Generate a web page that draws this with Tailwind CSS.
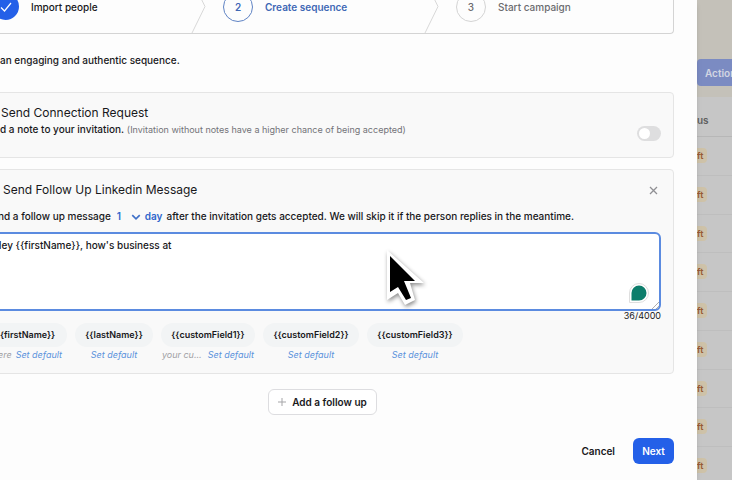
<!DOCTYPE html>
<html lang="en">
<head>
    <meta charset="UTF-8">
    <meta name="viewport" content="width=device-width, initial-scale=1.0">
    <title>Create sequence</title>
    <script src="https://cdn.jsdelivr.net/npm/@tailwindcss/browser@4"></script>
</head>
<body class="h-screen overflow-hidden flex bg-[#c6c6c6] font-['Inter',sans-serif] text-[10px] leading-4 text-[#18181b]">
    <main class="relative flex-1 min-w-0 -ml-6 pr-[23px] bg-[#fdfdfd] shadow-md">
        <!-- Steps -->
        <ol class="flex items-end h-[34px] overflow-hidden border-b border-r border-[#d4d4d4] rounded-br font-medium">
            <li class="relative shrink-0 w-[223px] h-[53px] flex items-center gap-3 pl-4">
                <span class="size-[27px] rounded-full bg-[#2460e8] flex items-center justify-center">
                    <svg class="size-4" viewBox="0 0 16 16" fill="none" stroke="#fff" stroke-width="1.2"><path d="M3 8.5l3.5 3.5L13 4"/></svg>
                </span>
                Import people
                <svg class="absolute right-[-8px] top-0 h-full w-4" viewBox="0 0 16 53" fill="none" stroke="#d8d8d8"><path d="M1 0l13 26.500L1 53"/></svg>
            </li>
            <li class="relative shrink-0 w-[233px] h-[53px] flex items-center gap-3 pl-6 font-semibold text-[#3f68b5]">
                <span class="size-[30px] rounded-full border border-[#5f83c4] flex items-center justify-center">2</span>
                Create sequence
                <svg class="absolute right-[-8px] top-0 h-full w-4" viewBox="0 0 16 53" fill="none" stroke="#d8d8d8"><path d="M1 0l13 26.500L1 53"/></svg>
            </li>
            <li class="h-[53px] flex items-center gap-3 pl-6 text-[#6b6b6f]">
                <span class="size-[30px] rounded-full border border-[#d4d4d4] flex items-center justify-center">3</span>
                Start campaign
            </li>
        </ol>

        <p class="mt-[18px] pl-6 font-medium">an engaging and authentic sequence.</p>

        <!-- Connection request -->
        <section class="mt-6 h-[66px] flex items-center justify-between border border-[#e5e5e5] rounded bg-[#f9f9f9] pl-6 pr-3">
            <div class="-mt-2">
                <h2 class="text-xs leading-4">Send Connection Request</h2>
                <p><span class="-ml-px font-medium">d a note to your invitation.</span> <span class="text-[9px] text-[#737378]">(Invitation without notes have a higher chance of being accepted)</span></p>
            </div>
            <label class="relative mt-4 w-6 h-[15px]">
                <input type="checkbox" role="switch" aria-label="Add a note" class="peer appearance-none block w-6 h-[15px] rounded-full bg-[#dededf]">
                <span class="absolute left-0.5 top-0.5 size-[11px] rounded-full bg-white"></span>
            </label>
        </section>

        <!-- Follow up message -->
        <section class="mt-[11px] border border-[#e5e5e5] rounded bg-[#f9f9f9] pr-3 pb-2.5">
            <div class="pt-3 flex items-center justify-between pl-[26px]">
                <h2 class="text-xs leading-4">Send Follow Up Linkedin Message</h2>
                <button type="button" aria-label="Remove follow up" class="size-4 flex items-center justify-center">
                    <svg class="size-[9px]" viewBox="0 0 9 9" fill="none" stroke="#909094" stroke-width="1.3"><path d="M1 1l7 7M8 1l-7 7"/></svg>
                </button>
            </div>
            <div class="mt-2.5 flex items-center whitespace-nowrap pl-[21px] font-medium">
                <span>nd a follow up message</span>
                <span class="relative ml-1.5 w-7 text-[#2f66cc] font-semibold">
                    <select aria-label="Delay" class="appearance-none w-full h-4 bg-transparent"><option>1</option></select>
                    <svg class="absolute right-1 top-1 size-2.5" viewBox="0 0 8 8" fill="none" stroke="#3f70c8" stroke-width="1.3"><path d="M1 2.500l3 3 3-3"/></svg>
                </span>
                <span class="mr-1 text-[#2f66cc] font-semibold">day</span>
                <span>after the invitation gets accepted. We will skip it if the person replies in the meantime.</span>
            </div>
            <div class="relative mt-2">
                <textarea aria-label="Message" class="block w-full h-[79px] px-[15px] py-[3px] font-medium leading-4 bg-white border-2 border-[#5b8be0] rounded-md outline-none resize-none">Hey {{firstName}}, how's business at</textarea>
                <svg class="absolute right-3 bottom-2 size-5" viewBox="0 0 20 20"><path d="M10 0.500a9.500 9.500 0 0 1 0 19H0.500V10A9.500 9.500 0 0 1 10 0.500z" fill="#fff" stroke="#dedede"/><path d="M10 2.500a7.500 7.500 0 0 1 0 15H2.500V10A7.500 7.500 0 0 1 10 2.500z" fill="#0d7d6b"/></svg>
                <svg class="absolute right-0.5 bottom-0.5 size-[7px]" viewBox="0 0 7 7" stroke="#999" stroke-width="0.8"><path d="M0 7L7 0M4 7l3-3"/></svg>
                <!-- Mouse pointer -->
                <svg class="absolute left-[407px] top-[15px] h-16 w-12 drop-shadow-[1px_2px_2px_rgba(0,0,0,0.45)]" viewBox="0 0 48 64">
                    <path d="M3 3L40 36H26L31 53 21 58 14 46 3 53z" fill="#fff"/>
                    <path d="M6 9L31 34H20L27 51 22 53 14 40 6 45z" fill="#000"/>
                </svg>
            </div>
            <p class="text-right text-[9px] leading-[10px]">36/4000</p>
            <div class="mt-0.5 ml-[7px] flex gap-2 text-[9px]">
                <div class="w-[83px]">
                    <button type="button" class="w-full h-6 rounded-full bg-[#f2f4f5] font-semibold">{{firstName}}</button>
                    <div class="h-4 flex items-center justify-end gap-1 pr-[5px] italic text-[#a0a0a4]"><span>ere</span><a href="#" class="text-[#5b93dc]">Set default</a></div>
                </div>
                <div class="w-[78px] text-center">
                    <button type="button" class="w-full h-6 rounded-full bg-[#f2f4f5] font-semibold">{{lastName}}</button>
                    <a href="#" class="block italic text-[#5b93dc]">Set default</a>
                </div>
                <div class="w-[94px]">
                    <button type="button" class="w-full h-6 rounded-full bg-[#f2f4f5] font-semibold">{{customField1}}</button>
                    <div class="flex justify-center gap-1.5 whitespace-nowrap italic text-[#a0a0a4]"><span>your cu...</span><a href="#" class="text-[#5b93dc]">Set default</a></div>
                </div>
                <div class="w-[96px] text-center">
                    <button type="button" class="w-full h-6 rounded-full bg-[#f2f4f5] font-semibold">{{customField2}}</button>
                    <a href="#" class="block italic text-[#5b93dc]">Set default</a>
                </div>
                <div class="w-[96px] text-center">
                    <button type="button" class="w-full h-6 rounded-full bg-[#f2f4f5] font-semibold">{{customField3}}</button>
                    <a href="#" class="block italic text-[#5b93dc]">Set default</a>
                </div>
            </div>
        </section>

        <div class="mt-[15px] flex justify-center">
            <button type="button" class="h-[26px] w-[109px] mr-[5px] flex items-center justify-center gap-1.5 whitespace-nowrap border border-[#dddde0] rounded-md bg-white font-semibold">
                <svg class="size-2" viewBox="0 0 8 8" stroke="#a5a5a8"><path d="M4 0v8M0 4h8"/></svg>
                Add a follow up
            </button>
        </div>

        <div class="mt-[23px] flex justify-end items-center gap-[18px] font-semibold">
            <button type="button">Cancel</button>
            <button type="button" class="h-[26px] w-[41px] rounded-md bg-[#2460e8] text-white">Next</button>
        </div>
    </main>

    <!-- Dimmed campaign list behind the dialog -->
    <aside class="w-[35px] shrink-0 flex flex-col overflow-hidden">
        <div class="h-[97px] shrink-0 bg-[#c4c1b9] pt-[59px]">
            <button type="button" class="h-[27px] w-20 pl-2 text-left rounded-l bg-[#7b8bc2] text-[#d2d6e2] font-semibold">Actions</button>
        </div>
        <table class="w-20 table-fixed text-left">
            <thead>
                <tr class="h-[39px] border-b border-[#b7b7b7]"><th class="p-0 pt-2 font-semibold text-[#606060]">us</th></tr>
            </thead>
            <tbody>
                <tr class="h-[39px] border-b border-[#bebebe]"><td class="p-0"><span class="pr-1 py-0.5 rounded-r bg-[#cec2a8] text-[9px] font-semibold text-[#985a35]">ft</span></td></tr>
                <tr class="h-[39px] border-b border-[#bebebe]"><td class="p-0"><span class="pr-1 py-0.5 rounded-r bg-[#cec2a8] text-[9px] font-semibold text-[#985a35]">ft</span></td></tr>
                <tr class="h-[38px] border-b border-[#bebebe]"><td class="p-0"><span class="pr-1 py-0.5 rounded-r bg-[#cec2a8] text-[9px] font-semibold text-[#985a35]">ft</span></td></tr>
                <tr class="h-[39px] border-b border-[#bebebe]"><td class="p-0"><span class="pr-1 py-0.5 rounded-r bg-[#cec2a8] text-[9px] font-semibold text-[#985a35]">ft</span></td></tr>
                <tr class="h-[39px] border-b border-[#bebebe]"><td class="p-0"><span class="pr-1 py-0.5 rounded-r bg-[#cec2a8] text-[9px] font-semibold text-[#985a35]">ft</span></td></tr>
                <tr class="h-[39px] border-b border-[#bebebe]"><td class="p-0"><span class="pr-1 py-0.5 rounded-r bg-[#cec2a8] text-[9px] font-semibold text-[#985a35]">ft</span></td></tr>
                <tr class="h-[38px] border-b border-[#bebebe]"><td class="p-0"><span class="pr-1 py-0.5 rounded-r bg-[#cec2a8] text-[9px] font-semibold text-[#985a35]">ft</span></td></tr>
                <tr class="h-[39px] border-b border-[#bebebe]"><td class="p-0"><span class="pr-1 py-0.5 rounded-r bg-[#cec2a8] text-[9px] font-semibold text-[#985a35]">ft</span></td></tr>
                <tr class="h-[39px]"><td class="p-0"><span class="pr-1 py-0.5 rounded-r bg-[#cec2a8] text-[9px] font-semibold text-[#985a35]">ft</span></td></tr>
            </tbody>
        </table>
    </aside>
</body>
</html>
